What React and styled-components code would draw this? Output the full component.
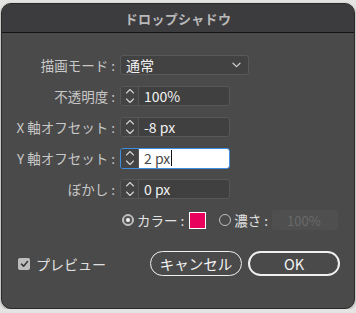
import React from "react";
import styled, { createGlobalStyle } from "styled-components";

const GlobalStyle = createGlobalStyle`
  html, body {
    margin: 0;
    background: #e4e4e2;
  }
  * {
    box-sizing: border-box;
  }
`;

const FONT = `"Noto Sans CJK JP", "Noto Sans", sans-serif`;

const Window = styled.div`
  width: 354px;
  height: 306px;
  margin: 3px 0 0 1px;
  display: flex;
  flex-direction: column;
  background: #4a4a4a;
  border: 1px solid #2a2a2a;
  border-radius: 10px;
  overflow: hidden;
  font-family: ${FONT};
  box-shadow: 0 1px 3px rgba(0, 0, 0, 0.35);
`;

const TitleBar = styled.div`
  height: 29px;
  flex-shrink: 0;
  display: flex;
  align-items: center;
  justify-content: center;
  background: #3c3b3e;
  border-bottom: 1px solid #141414;
  color: #b9b9b9;
  font-size: 13px;
  font-weight: 700;
  letter-spacing: 0.3px;
`;

const Body = styled.div`
  flex: 1;
  display: flex;
  flex-direction: column;
  padding: 22px 14px 0 0;
`;

const Form = styled.div`
  display: flex;
  flex-direction: column;
  gap: 11px;
`;

const Row = styled.div`
  height: 20px;
  display: flex;
  align-items: center;
  gap: 5px;
`;

const Label = styled.div`
  width: 113px;
  flex-shrink: 0;
  text-align: right;
  color: #c8c8c8;
  font-size: 13.5px;
  white-space: nowrap;
`;

const Select = styled.div`
  width: 129px;
  height: 20px;
  display: flex;
  align-items: center;
  justify-content: space-between;
  padding: 0 7px 0 5px;
  background: #424242;
  border: 1px solid #595959;
  border-radius: 3px;
  color: #f2f2f2;
  font-size: 14px;
`;

const Spinner = styled.div`
  width: 110px;
  height: ${({ $focused }) => ($focused ? 21 : 20)}px;
  display: flex;
  border: 1px solid ${({ $focused }) => ($focused ? "#3d8ee0" : "#575757")};
  border-radius: 3px;
  background: #404040;
  overflow: hidden;
`;

const Arrows = styled.div`
  width: 18px;
  flex-shrink: 0;
  display: flex;
  align-items: center;
  justify-content: center;
  border-right: 1px solid #575757;
  background: #444;
`;

const Value = styled.div`
  flex: 1;
  display: flex;
  align-items: center;
  padding-left: 5px;
  font-size: 14px;
  color: ${({ $focused }) => ($focused ? "#4a4a4a" : "#f2f2f2")};
  background: ${({ $focused }) => ($focused ? "#ffffff" : "transparent")};
`;

const Caret = styled.span`
  display: inline-block;
  width: 1px;
  height: 16px;
  margin-left: 1px;
  background: #111;
`;

const OptionRow = styled.div`
  height: 20px;
  margin-top: 11px;
  display: flex;
  align-items: center;
  padding-left: 120px;
  color: #e2e2e2;
  font-size: 13.5px;
  white-space: nowrap;
`;

const Radio = styled.span`
  width: 12px;
  height: 12px;
  flex-shrink: 0;
  border-radius: 50%;
  display: flex;
  align-items: center;
  justify-content: center;
  border: 1px solid #bdbdbd;
  background: ${({ $checked }) => ($checked ? "#bdbdbd" : "transparent")};
  margin-right: 3px;

  &::after {
    content: "";
    display: ${({ $checked }) => ($checked ? "block" : "none")};
    width: 4px;
    height: 4px;
    border-radius: 50%;
    background: #f4f4f4;
    box-shadow: 0 0 0 2px #555;
  }
`;

const OptionText = styled.span`
  flex-shrink: 0;
`;

const Swatch = styled.span`
  width: 17px;
  height: 17px;
  flex-shrink: 0;
  margin: 0 13px 0 5px;
  background: #e8005c;
  border: 1px solid #ffffff;
`;

const DisabledInput = styled.div`
  width: 66px;
  height: 20px;
  margin-left: 4px;
  display: flex;
  align-items: center;
  padding-left: 15px;
  background: #4f4f4f;
  border-radius: 2px;
  color: #6a6a6a;
  font-size: 13px;
`;

const Footer = styled.div`
  display: flex;
  align-items: center;
  margin-top: 21px;
  padding-left: 16px;
`;

const Check = styled.span`
  width: 12px;
  height: 12px;
  display: flex;
  align-items: center;
  justify-content: center;
  border-radius: 2px;
  background: #bdbdbd;
  margin-right: 6px;
`;

const Preview = styled.span`
  color: #e0e0e0;
  font-size: 14px;
  flex: 1;
`;

const Button = styled.button`
  width: 92px;
  height: 25px;
  margin-left: ${({ $gap }) => $gap || 0}px;
  border-radius: 13px;
  border: ${({ $primary }) => ($primary ? 2 : 1)}px solid #f0f0f0;
  background: transparent;
  color: #f4f4f4;
  font-family: ${FONT};
  font-size: 14.5px;
  padding: 0;
`;

const Chevrons = () => (
  <svg width="10" height="18" viewBox="0 0 10 18" fill="none" stroke="#d4d4d4" strokeWidth="1.1" strokeLinecap="round" strokeLinejoin="round">
    <path d="M1.5 6 L5 2.5 L8.5 6" />
    <path d="M1.5 12 L5 15.5 L8.5 12" />
  </svg>
);

const DownChevron = () => (
  <svg width="9" height="6" viewBox="0 0 9 6" fill="none" stroke="#d0d0d0" strokeWidth="1.2" strokeLinecap="round" strokeLinejoin="round">
    <path d="M1 1.2 L4.5 4.6 L8 1.2" />
  </svg>
);

const CheckMark = () => (
  <svg width="9" height="8" viewBox="0 0 9 8" fill="none" stroke="#3a3a3a" strokeWidth="1.6" strokeLinecap="round" strokeLinejoin="round">
    <path d="M1.5 4.2 L3.6 6.2 L7.5 1.6" />
  </svg>
);

const fields = [
  { label: "不透明度 :", value: "100%" },
  { label: "X 軸オフセット :", value: "-8 px" },
  { label: "Y 軸オフセット :", value: "2 px", focused: true },
  { label: "ぼかし :", value: "0 px" },
];

export default function App() {
  return (
    <>
      <GlobalStyle />
      <Window>
        <TitleBar>ドロップシャドウ</TitleBar>
        <Body>
          <Form>
            <Row>
              <Label>描画モード :</Label>
              <Select>
                通常
                <DownChevron />
              </Select>
            </Row>
            {fields.map((f) => (
              <Row key={f.label}>
                <Label>{f.label}</Label>
                <Spinner $focused={f.focused}>
                  <Arrows>
                    <Chevrons />
                  </Arrows>
                  <Value $focused={f.focused}>
                    {f.value}
                    {f.focused && <Caret />}
                  </Value>
                </Spinner>
              </Row>
            ))}
          </Form>
          <OptionRow>
            <Radio $checked />
            <OptionText>カラー :</OptionText>
            <Swatch />
            <Radio />
            <OptionText>濃さ :</OptionText>
            <DisabledInput>100%</DisabledInput>
          </OptionRow>
          <Footer>
            <Check>
              <CheckMark />
            </Check>
            <Preview>プレビュー</Preview>
            <Button>キャンセル</Button>
            <Button $primary $gap={6}>OK</Button>
          </Footer>
        </Body>
      </Window>
    </>
  );
}
